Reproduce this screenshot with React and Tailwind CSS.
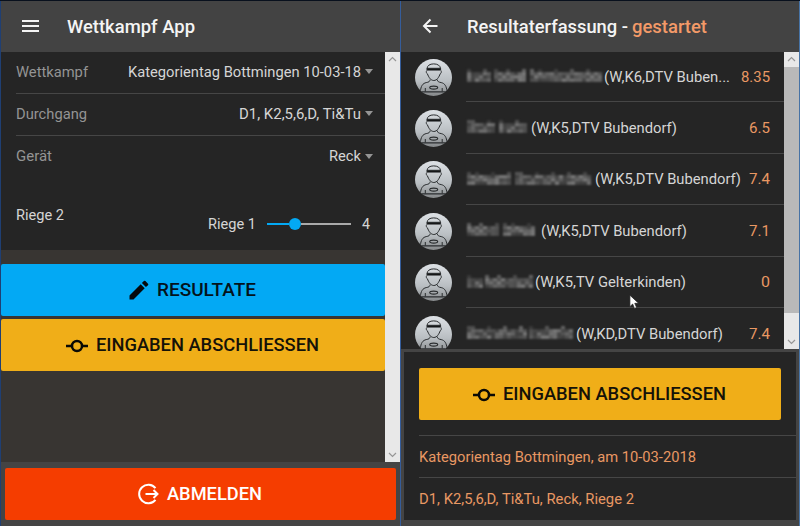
import React from 'react';

const people = [
  { words: [22, 31, 72], gap: 5, width: 138, club: '(W,K6,DTV Buben...', score: '8.35', clubWidth: 126, tall: 'h-[50px]' },
  { words: [26, 28], gap: 6, width: 65, club: '(W,K5,DTV Bubendorf)', score: '6.5', clubWidth: 146, tall: 'h-[52px]' },
  { words: [44, 76], gap: 4, width: 129, club: '(W,K5,DTV Bubendorf)', score: '7.4', clubWidth: 146, tall: 'h-[51px]' },
  { words: [32, 32], gap: 4, width: 75, club: '(W,K5,DTV Bubendorf)', score: '7.1', clubWidth: 146, tall: 'h-[52px]' },
  { words: [14, 46], gap: 4, width: 69, club: '(W,K5,TV Gelterkinden)', score: '0', clubWidth: 151, tall: 'h-[51px]' },
  { words: [58, 43], gap: 4, width: 110, club: '(W,KD,DTV Bubendorf)', score: '7.4', clubWidth: 147, tall: 'h-[52px]' },
];

const greys = ['#4b4b4b', '#707070', '#5c5c5c', '#7c7c7c', '#444444', '#666666', '#858585', '#565656'];

// Anonymised name: one mosaic strip per word.
function Mosaic({ words, gap, seed }) {
  const cells = [];
  let x = 0;
  words.forEach((w, k) => {
    const n = Math.max(1, Math.round(w / 4));
    for (let i = 0; i < n; i++) {
      for (let j = 0; j < 4; j++) {
        if (j === 0 && i > 0 && (i * 5 + seed * 3 + k) % 4 !== 0) continue;
        const v = (i * 37 + j * 11 + seed * 17 + k * 7 + ((i * i * (j + 3)) % 13)) % 8;
        cells.push(<rect key={`${k}-${i}-${j}`} x={x + i * 4} y={j * 3.2} width="4" height="3.2" fill={greys[v]} opacity={j === 0 ? 0.65 : 0.92} />);
      }
    }
    x += w + gap;
  });
  return (
    <svg width={x} height="14" className="mt-[-1px] ml-px block overflow-visible blur-[1px]">{cells}</svg>
  );
}

function Avatar() {
  return (
    <svg viewBox="0 0 37 37" className="block size-[37px] shrink-0">
      <defs>
        <linearGradient id="silver" x1="0" y1="0" x2="0" y2="1">
          <stop offset="0" stopColor="#dde1e5" />
          <stop offset="0.6" stopColor="#b9bec2" />
          <stop offset="1" stopColor="#85888a" />
        </linearGradient>
        <clipPath id="disc"><circle cx="18.5" cy="18.5" r="18.5" /></clipPath>
      </defs>
      <circle cx="18.5" cy="18.5" r="18.5" fill="url(#silver)" />
      <g clipPath="url(#disc)" fill="none" stroke="#2a2d2f" strokeWidth="1">
        <path d="M12 9.500C12.300 6.500 14.800 4.900 18.700 4.900s6.500 1.600 6.800 4.600" />
        <path d="M11.600 11.500c-.6 1.300-.3 2.800.8 3.300 1.200 3.200 3.200 6.700 6.400 6.700s5.200-3.500 6.400-6.700c1.100-.5 1.400-2 .8-3.300" />
        <path d="M12 9.300h13.600v1.800H12z" fill="#08090a" />
        <path d="M15.200 20.500c-.3 2.300-1.500 2.600-4 3.100-3.400.7-5.300 3.300-5.900 9.200M22.200 20.500c.3 2.300 1.500 2.600 4 3.100 3.400.7 5.300 3.300 5.900 9.200" />
        <path d="M10.300 29v3.500M27.200 29v3.500" />
        <ellipse cx="18.700" cy="28.600" rx="4" ry="1.500" strokeWidth="1.100" />
        <path d="M5 32.900h27.400" strokeWidth="1.100" />
      </g>
    </svg>
  );
}

function Chevron({ up }) {
  return (
    <svg viewBox="0 0 15 15" className="block size-[15px]" fill="none" stroke="#969696" strokeWidth="1.200">
      <path d={up ? 'M4 9l3.500-3.500L11 9' : 'M4 6l3.500 3.500L11 6'} />
    </svg>
  );
}

function CommitIcon() {
  return (
    <svg viewBox="0 0 24 14" className="mt-[1px] block h-[14px] w-[24px]" fill="none" stroke="#0b0a05" strokeWidth="2.500">
      <circle cx="12" cy="7" r="5" />
      <path d="M1 7h6M17 7h6" />
    </svg>
  );
}

// A single line of text held to a fixed measure.
function Line({ width, size, className = '', children }) {
  return (
    <svg width={width} height="24" className={`block shrink-0 overflow-visible fill-current ${className}`}>
      <text x="0" y="17.300" fontSize={size} textLength={width} lengthAdjust="spacingAndGlyphs">{children}</text>
    </svg>
  );
}

function Caret() {
  return <span className="mb-[2px] ml-[4px] h-0 w-0 border-x-[4.500px] border-t-[5px] border-x-transparent border-t-[#959595]" />;
}

function SelectRow({ label, labelWidth, value, valueWidth, border, tall }) {
  return (
    <div className={`ml-[15px] flex items-center justify-between pr-[12px] text-[#d5d5d5] ${tall} ${border ? 'border-b border-[#464646]' : ''}`}>
      <Line width={labelWidth} size="15.500" className="mb-[2px] text-[#949494]">{label}</Line>
      <div className="flex items-center">
        <Line width={valueWidth} size="15.500" className="mb-[2px]">{value}</Line>
        <Caret />
      </div>
    </div>
  );
}

function LeftPanel() {
  return (
    <section className="flex w-[401px] flex-col border-x border-l-[#1f3f73] border-r-[#355d9b]">
      <header className="flex h-[51px] shrink-0 items-center bg-[#434343] pl-[21px] text-[#f4f4f4]">
        <div className="mb-[2px] flex h-[12px] w-[17px] flex-col justify-between">
          <i className="h-[2px] bg-current" /><i className="h-[2px] bg-current" /><i className="h-[2px] bg-current" />
        </div>
        <Line width={128} size="18.750" className="ml-[28px] mt-[3px] font-medium">Wettkampf App</Line>
      </header>
      <div className="flex h-[410px] shrink-0">
        <div className="w-[384px] bg-[#383532]">
          <div className="h-[198px] bg-[#252525]">
            <SelectRow label="Wettkampf" labelWidth={72} value="Kategorientag Bottmingen 10-03-18" valueWidth={233} border tall="h-[42px]" />
            <SelectRow label="Durchgang" labelWidth={71} value="D1, K2,5,6,D, Ti&Tu" valueWidth={122} border tall="h-[42px]" />
            <SelectRow label="Gerät" labelWidth={36} value="Reck" valueWidth={32} tall="h-[42px]" />
            <div className="flex h-[72px] items-center pl-[15px] text-[#d5d5d5]">
              <Line width={48} size="15.500" className="mb-[-1px]">Riege 2</Line>
              <div className="ml-[144px] mt-[20px] flex items-center">
                <Line width={48} size="15.500">Riege 1</Line>
                <div className="ml-[11px] flex w-[84px] items-center">
                  <span className="h-[2px] w-[22px] bg-[#03a9f4]" />
                  <span className="size-[12px] rounded-full bg-[#03a9f4]" />
                  <span className="h-[2px] flex-1 bg-[#aaa]" />
                </div>
                <Line width={8} size="15.500" className="ml-[11px]">4</Line>
              </div>
            </div>
          </div>
          <button className="mt-[14px] flex h-[52px] w-full items-center rounded-[2px] bg-[#03a9f4] pl-[128px] text-[#04131b]">
            <svg viewBox="0 0 20 20" className="mr-[8px] block size-[20px]" fill="#06090b">
              <path d="M.5 15.500V19.500H4.500L15.700 8.300l-4-4zM19 5.200a1.100 1.100 0 0 0 0-1.500L16.400 1a1.100 1.100 0 0 0-1.500 0l-2 2 4 4z" />
            </svg>
            <Line width={99} size="18.750" className="mt-[2px] font-medium">RESULTATE</Line>
          </button>
          <button className="mt-[3px] flex h-[52px] w-full items-center rounded-[2px] bg-[#f0ae18] pl-[64px] text-[#151208]">
            <CommitIcon />
            <Line width={223} size="18.750" className="ml-[7px] mt-[2px] font-medium">EINGABEN ABSCHLIESSEN</Line>
          </button>
        </div>
        <div className="flex w-[15px] flex-col justify-between bg-[#e8e8e8]">
          <Chevron up />
          <Chevron />
        </div>
      </div>
      <footer className="h-[64px] bg-[#444444] pl-[4px] pt-[6px]">
        <button className="flex h-[52px] w-[391px] items-center rounded-[2px] bg-[#f53d00] pl-[133px] text-white">
          <svg viewBox="0 0 22 22" className="block size-[22px]" fill="none" stroke="currentColor" strokeWidth="2">
            <path d="M17.500 5.200a9.200 9.200 0 1 0 0 11.600M7.500 11h12M15.500 7l4 4-4 4" />
          </svg>
          <Line width={95} size="18.750" className="ml-[7px] mt-[2px] font-medium">ABMELDEN</Line>
        </button>
      </footer>
    </section>
  );
}

function RightPanel() {
  return (
    <section className="flex w-[399px] flex-col border-r border-[#4773a5] bg-[#444444]">
      <header className="flex h-[51px] shrink-0 items-center bg-[#434343] pl-[21px] text-[#f4f4f4]">
        <svg viewBox="0 0 16 16" className="mb-[2px] block size-[16px]" fill="none" stroke="currentColor" strokeWidth="2">
          <path d="M8.500 1.500L2 8l6.500 6.500M2 8h13.500" />
        </svg>
        <Line width={161} size="18.750" className="ml-[29px] mt-[3px] font-medium">Resultaterfassung -</Line>
        <Line width={75} size="18.750" className="ml-[4px] mt-[3px] font-medium text-[#f39a68]">gestartet</Line>
      </header>
      <div className="flex h-[297px] shrink-0 overflow-hidden">
        <div className="w-[383px] bg-[#252525]">
          {people.map((p, i) => (
            <div key={i} className={`flex ${p.tall}`}>
              <div className="flex w-[65px] shrink-0 items-center pl-[14px]"><Avatar /></div>
              <div className="flex flex-1 items-center border-b border-[#464646] pr-[14px] text-[#d5d5d5]">
                <div className="shrink-0" style={{ width: p.width }}>
                  <Mosaic words={p.words} gap={p.gap} seed={i} />
                </div>
                <Line width={p.clubWidth} size="15.500">{p.club}</Line>
                <div className="ml-auto text-[#e99863]">
                  <Line width={p.score.length === 4 ? 29 : p.score.length === 3 ? 21 : 9} size="15.500">{p.score}</Line>
                </div>
              </div>
            </div>
          ))}
        </div>
        <div className="flex w-[15px] flex-col bg-[#e8e8e8]">
          <Chevron up />
          <div className="h-[246px] bg-[#b9b9b9]" />
          <div className="mt-auto"><Chevron /></div>
        </div>
      </div>
      <div className="ml-[3px] mt-[3px] h-[168px] w-[392px] bg-[#252525] pl-[15px] text-[#e99863]">
        <button className="mt-[16px] flex h-[52px] w-[362px] items-center rounded-[2px] bg-[#f0ae18] pl-[53px] text-[#151208]">
          <CommitIcon />
          <Line width={223} size="18.750" className="ml-[7px] mt-[2px] font-medium">EINGABEN ABSCHLIESSEN</Line>
        </button>
        <div className="mt-[15px] flex h-[42px] items-center border-t border-[#464646]">
          <Line width={277} size="15.500">Kategorientag Bottmingen, am 10-03-2018</Line>
        </div>
        <div className="flex h-[42px] items-center border-t border-[#464646]">
          <Line width={215} size="15.500">D1, K2,5,6,D, Ti&Tu, Reck, Riege 2</Line>
        </div>
      </div>
    </section>
  );
}

export default function App() {
  return (
    <main className="relative flex h-[526px] w-[800px] overflow-hidden border-t border-[#08101d] bg-[#444444] font-[Roboto,sans-serif]">
      <LeftPanel />
      <RightPanel />
      <svg viewBox="0 0 12 18" className="absolute left-[629px] top-[293px] h-[17px] w-[11px]">
        <path d="M1 1v12.500l3-2.800 2 4.800 2.300-1-2-4.600h4.200z" fill="white" stroke="#222" strokeWidth="0.800" />
      </svg>
    </main>
  );
}
